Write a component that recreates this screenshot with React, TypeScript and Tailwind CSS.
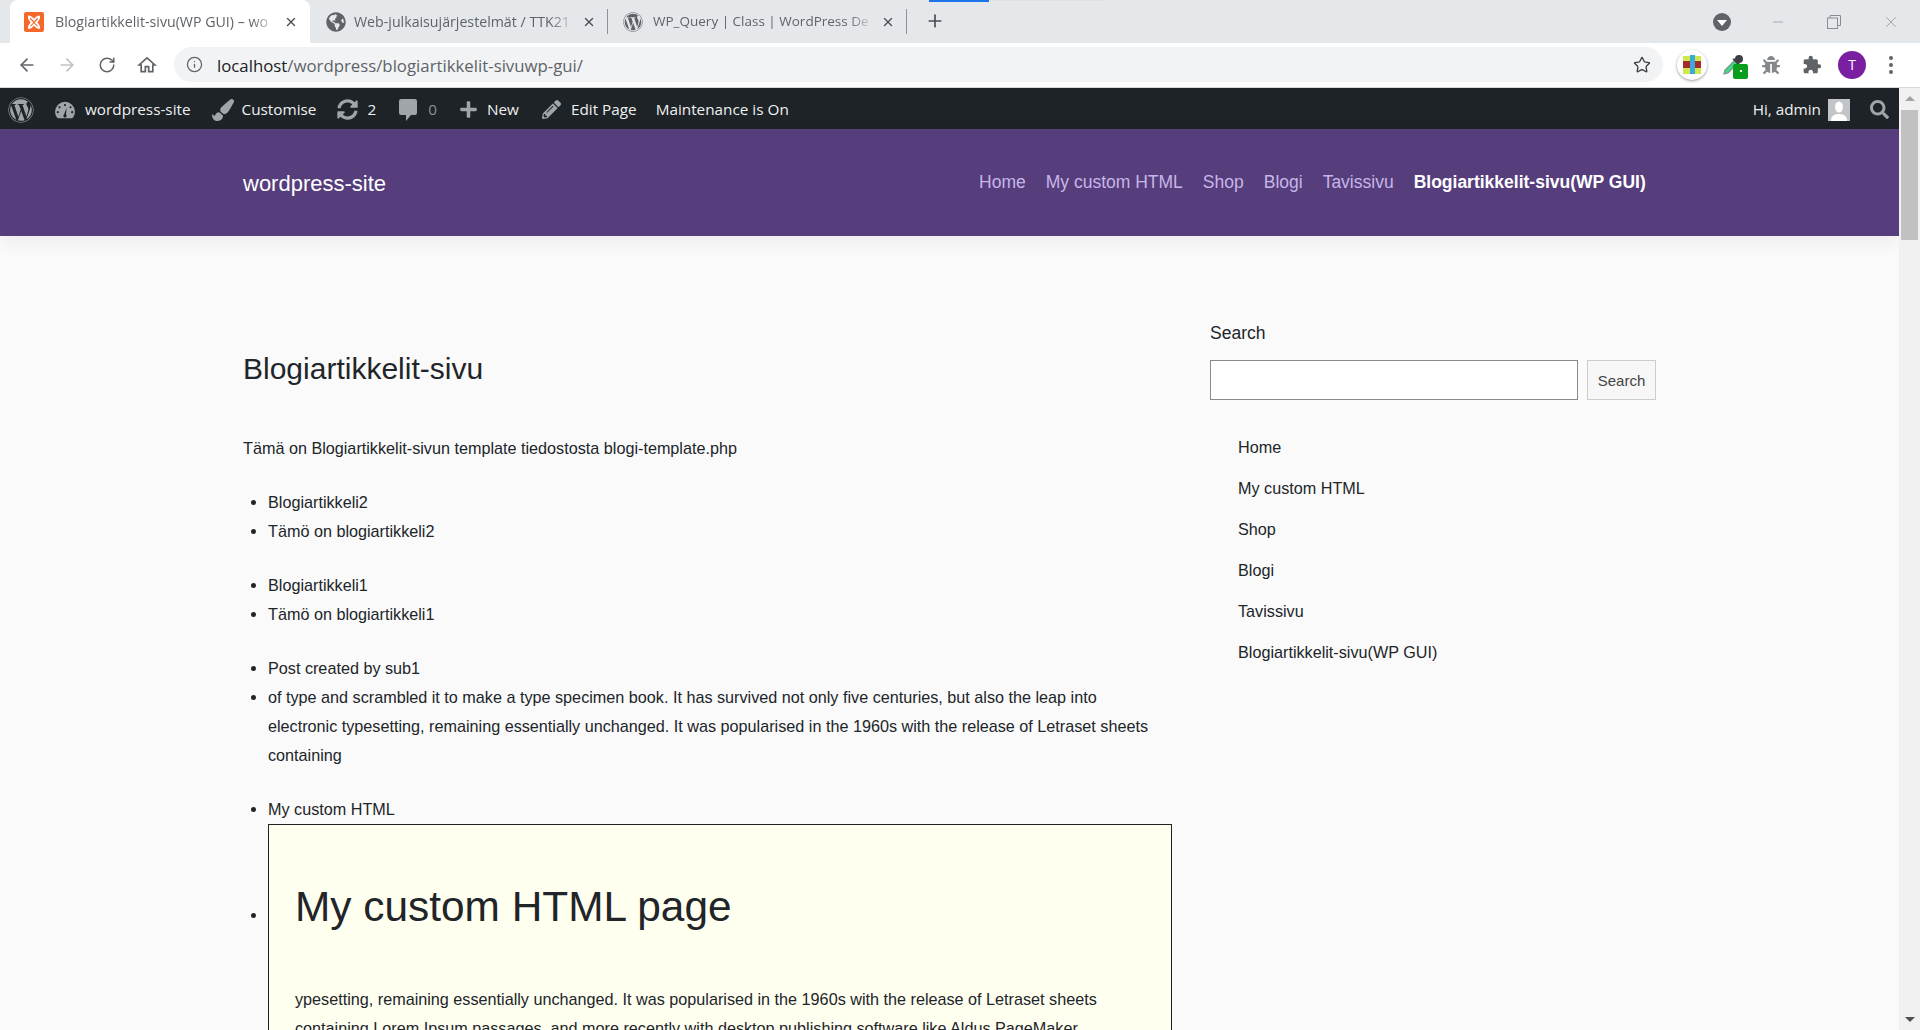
import { ArrowLeft, ArrowRight, RotateCw, Info, Star, Plus, X, Minus } from "lucide-react";
import { FaWordpress, FaPaintBrush, FaSyncAlt, FaPlus, FaPencilAlt, FaSearch, FaBug, FaGlobeAmericas } from "react-icons/fa";

const UI_FONT = "font-['Open_Sans',sans-serif]";

const XamppIcon = () => (
  <svg viewBox="0 0 20 20" className="size-5 shrink-0">
    <rect width="20" height="20" rx="2" fill="#f4692a" />
    <path d="M5 4.500c2.500 0 3.500 1.500 5 3.500 1.500-2 2.500-3.500 5-3.500 1 2-1 4-3 6 2 2 4 4 3 5.500-2.500 0-3.500-1.500-5-3.500-1.500 2-2.500 3.500-5 3.500-1-1.500 1-3.500 3-5.500-2-2-4-4-3-6z" fill="none" stroke="#fff" strokeWidth="1.800" />
  </svg>
);

const Tab = ({ icon, title, active, sep, w, gap, size }: { icon: React.ReactNode; title: string; active?: boolean; sep?: boolean; w: string; gap: string; size: string }) => (
  <div className={`relative flex items-center h-full shrink-0 pl-[14px] pr-[12px] ${w} ${active ? "bg-white rounded-t-[8px]" : ""}`}>
    {icon}
    <span className={`${gap} ${size} flex-1 overflow-hidden whitespace-nowrap text-[#5f6368] [mask-image:linear-gradient(to_right,black_88%,transparent)]`}>{title}</span>
    <X size={14} strokeWidth={2.400} className="ml-[6px] shrink-0 text-[#4a4d51]" />
    {sep && <div className="absolute right-0 top-[9px] h-[25px] w-px bg-[#8f9296]" />}
  </div>
);

const TabStrip = () => (
  <div className={`relative flex items-end h-[43px] pl-[10px] bg-[#e5e8eb] ${UI_FONT}`}>
    <div className="absolute left-[929px] top-0 h-[2px] w-[60px] bg-[#1a73e8]" />
    <div className="absolute left-[989px] top-0 h-[1px] w-[118px] bg-[#dfe1e4]" />
    <Tab w="w-[300px]" gap="ml-[11px]" size="text-[14.200px]" active icon={<XamppIcon />} title="Blogiartikkelit-sivu(WP GUI) – wo" />
    <Tab w="w-[298px]" gap="ml-[8px]" size="text-[14.200px]" sep icon={<FaGlobeAmericas size={20} className="shrink-0 text-[#5f6368] ml-[2px]" />} title="Web-julkaisujärjestelmät / TTK21" />
    <Tab w="w-[299px]" gap="ml-[10px]" size="text-[13.500px]" sep icon={<FaWordpress size={20} className="shrink-0 text-[#5f6368] ml-[1px]" />} title="WP_Query | Class | WordPress De" />
    <Plus size={20} strokeWidth={2} className="ml-[18px] mb-[12px] text-[#4a4d51]" />
    <div className="flex-1" />
    <div className="flex items-center self-start h-[36px] mt-[4px]">
      <div className="flex items-center justify-center size-[18px] rounded-full bg-[#5f6368]">
        <div className="w-0 h-0 border-x-[5px] border-x-transparent border-t-[6px] border-t-white mt-[2px]" />
      </div>
      <Minus size={16} strokeWidth={1} className="ml-[39px] text-[#8a8d91]" />
      <svg viewBox="0 0 14 14" className="size-[14px] ml-[41px]" fill="none" stroke="#8a8d91">
        <rect x="0.500" y="3" width="10" height="10.500" />
        <path d="M3 3V.5h10.500v10H10.500" />
      </svg>
      <X size={18} strokeWidth={1} className="ml-[41px] mr-[20px] text-[#8a8d91]" />
    </div>
  </div>
);

const HomeOutline = () => (
  <svg viewBox="0 0 24 24" className="size-[20px] ml-[21px]" fill="none" stroke="#5f6368" strokeWidth="2" strokeLinejoin="miter">
    <path d="M10 20v-6h4v6h5v-8h2.500L12 3.500 2.500 12H5v8z" />
  </svg>
);

const DropperIcon = () => (
  <svg viewBox="0 0 24 24" className="size-[24px]">
    <path d="M3 21l1-4L14 7l3 3L7 20z" fill="#3ddc84" stroke="#8a8d91" strokeWidth="1.200" />
    <path d="M13 5l6 6-1.500 1.500-6-6z" fill="#3c4043" />
    <circle cx="18" cy="6" r="4" fill="#3c4043" />
  </svg>
);

const PuzzleIcon = () => (
  <svg viewBox="0 0 24 24" className="size-[20px]" fill="#5f6368">
    <path d="M20.500 11H19V7c0-1.100-.9-2-2-2h-4V3.500C13 2.120 11.880 1 10.500 1S8 2.120 8 3.500V5H4c-1.100 0-1.990.9-1.990 2v3.800H3.500c1.490 0 2.700 1.210 2.700 2.700s-1.210 2.700-2.700 2.700H2V20c0 1.100.9 2 2 2h3.800v-1.500c0-1.490 1.210-2.700 2.700-2.700 1.490 0 2.700 1.210 2.700 2.700V22H17c1.100 0 2-.9 2-2v-4h1.500c1.380 0 2.500-1.120 2.500-2.500S21.880 11 20.500 11z" />
  </svg>
);

const AddressRow = () => (
  <div className={`flex items-center h-[45px] pb-px bg-white border-b border-[#d6d8da] ${UI_FONT}`}>
    <ArrowLeft size={20} strokeWidth={2} className="ml-[17px] text-[#5f6368]" />
    <ArrowRight size={20} strokeWidth={2} className="ml-[20px] text-[#bfc1c4]" />
    <RotateCw size={18} strokeWidth={2} className="ml-[21px] text-[#5f6368]" />
    <HomeOutline />
    <div className="flex items-center flex-none w-[1489px] h-[35px] ml-[17px] pl-[12px] rounded-full bg-[#f1f3f4]">
      <Info size={17} strokeWidth={1.800} className="text-[#5f6368]" />
      <span className="ml-[14px] mt-[2px] text-[16.800px] text-[#5f6368] whitespace-nowrap">
        <span className="text-[#202124]">localhost</span>/wordpress/blogiartikkelit-sivuwp-gui/
      </span>
      <div className="flex-1" />
      <Star size={18} strokeWidth={1.800} className="mr-[12px] text-[#3c4043]" />
    </div>
    <div className="relative flex items-center justify-center ml-[14px] size-[30px] rounded-full bg-white shadow-[0_1px_3px_rgba(0,0,0,0.4)]">
      <div className="size-[18px] bg-[#cfe84a]" />
      <div className="absolute w-[18px] h-[7px] bg-[#a52a2a]" />
      <div className="absolute w-[5px] h-[19px] bg-[#3ba9dc]" />
    </div>
    <div className="relative ml-[14px] size-[24px]">
      <DropperIcon />
      <div className="absolute left-[12px] top-[11px] flex items-center justify-center size-[15px] rounded-[2px] bg-[#0a9e1f]">
        <div className="size-[2px] bg-white" />
      </div>
    </div>
    <FaBug size={18} className="ml-[17px] text-[#85888b]" />
    <div className="ml-[22px]"><PuzzleIcon /></div>
    <div className="flex items-center justify-center ml-[16px] size-[28px] rounded-full bg-[#7b1fa2] text-white text-[14px]">T</div>
    <div className="flex flex-col gap-[3px] ml-[23px]">
      <div className="size-[4px] rounded-full bg-[#5f6368]" />
      <div className="size-[4px] rounded-full bg-[#5f6368]" />
      <div className="size-[4px] rounded-full bg-[#5f6368]" />
    </div>
  </div>
);

const DashIcon = () => (
  <svg viewBox="0 0 20 20" className="size-[22px] shrink-0" fill="#a0a5aa">
    <path fillRule="evenodd" d="M10 2.500a9 9 0 0 0-9 9c0 2.500 1 4.500 2.400 6h13.200c1.400-1.500 2.400-3.500 2.400-6a9 9 0 0 0-9-9zM10 4.500a1 1 0 1 1 0 2 1 1 0 0 1 0-2zM5 6.500a1 1 0 1 1 0 2 1 1 0 0 1 0-2zM15 6.500a1 1 0 1 1 0 2 1 1 0 0 1 0-2zM3.500 11a1 1 0 1 1 0 2 1 1 0 0 1 0-2zM16.500 11a1 1 0 1 1 0 2 1 1 0 0 1 0-2zM11.500 8l-.6 6.100a1.500 1.500 0 1 1-1.800 0z" />
  </svg>
);

const CommentIcon = () => (
  <svg viewBox="0 0 18 22" className="h-[22px] w-[18px] shrink-0" fill="#a0a5aa">
    <path d="M2 0h14a2 2 0 0 1 2 2v12a2 2 0 0 1-2 2h-4l-5 6v-6H2a2 2 0 0 1-2-2V2a2 2 0 0 1 2-2z" />
  </svg>
);

const AdminBar = () => (
  <div className={`flex shrink-0 items-center h-[41px] pt-[2px] bg-[#1d2327] text-[#f0f0f1] text-[15.300px] whitespace-nowrap ${UI_FONT}`}>
    <FaWordpress size={26} className="ml-[8px] text-[#a0a5aa]" />
    <div className="ml-[20px]"><DashIcon /></div>
    <span className="ml-[9px]">wordpress-site</span>
    <FaPaintBrush size={22} className="ml-[21px] text-[#a0a5aa]" />
    <span className="ml-[8px]">Customise</span>
    <FaSyncAlt size={21} className="ml-[21px] text-[#a0a5aa]" />
    <span className="ml-[9px]">2</span>
    <div className="ml-[23px]"><CommentIcon /></div>
    <span className="ml-[11px] text-[#8c8f94]">0</span>
    <FaPlus size={19} className="ml-[22px] text-[#a0a5aa]" />
    <span className="ml-[9px]">New</span>
    <FaPencilAlt size={19} className="ml-[23px] text-[#a0a5aa]" />
    <span className="ml-[10px]">Edit Page</span>
    <span className="ml-[19px]">Maintenance is On</span>
    <div className="flex-1" />
    <span>Hi, admin</span>
    <div className="ml-[7px] flex items-end justify-center size-[22px] bg-[#c3c4c7] overflow-hidden">
      <svg viewBox="0 0 22 22" className="size-[22px]" fill="#fff">
        <ellipse cx="11" cy="8" rx="4" ry="5.500" />
        <path d="M3 22c0-5 3-7 8-7s8 2 8 7z" />
      </svg>
    </div>
    <FaSearch size={19} className="ml-[20px] mr-[10px] text-[#a0a5aa]" />
  </div>
);

const navItems = ["Home", "My custom HTML", "Shop", "Blogi", "Tavissivu"];

const SiteHeader = () => (
  <div className="flex shrink-0 items-center h-[107px] pt-[2px] pl-[243px] bg-[#563d7c] shadow-[0_8px_16px_rgba(0,0,0,0.05)]">
    <span className="text-[22px] text-white">wordpress-site</span>
    <nav className="flex items-center gap-[20px] ml-[593px] -mt-[2px] text-[17.500px] text-[#c6b6e8]">
      {navItems.map((n) => (
        <span key={n}>{n}</span>
      ))}
      <span className="font-bold text-white">Blogiartikkelit-sivu(WP GUI)</span>
    </nav>
  </div>
);

const posts = [
  ["Blogiartikkeli2", "Tämö on blogiartikkeli2"],
  ["Blogiartikkeli1", "Tämö on blogiartikkeli1"],
  [
    "Post created by sub1",
    "of type and scrambled it to make a type specimen book. It has survived not only five centuries, but also the leap into electronic typesetting, remaining essentially unchanged. It was popularised in the 1960s with the release of Letraset sheets containing",
  ],
];

const MainColumn = () => (
  <div className="w-[929px] shrink-0">
    <h1 className="mt-[115px] text-[30px] leading-[36px] text-[#212529]">Blogiartikkelit-sivu</h1>
    <p className="mt-[47px] mb-[25px]">Tämä on Blogiartikkelit-sivun template tiedostosta blogi-template.php</p>
    {posts.map((p) => (
      <ul key={p[0]} className="list-disc pl-[25px] mb-[25px] max-w-[925px]">
        {p.map((t) => (
          <li key={t}>{t}</li>
        ))}
      </ul>
    ))}
    <ul className="list-disc pl-[25px]">
      <li>My custom HTML</li>
      <li>
        <div className="border border-[#222] bg-[#fffff0] px-[26px]">
          <h2 className="mt-[55px] text-[42.400px] leading-[54px] text-[#212529]">My custom HTML page</h2>
          <p className="mt-[51px]">
            ypesetting, remaining essentially unchanged. It was popularised in the 1960s with the release of Letraset sheets containing Lorem Ipsum passages, and more recently with desktop publishing software like Aldus PageMaker including versions of Lorem Ipsum.
          </p>
        </div>
      </li>
    </ul>
  </div>
);

const Sidebar = () => (
  <div className="ml-[38px] w-[446px] shrink-0 pt-[83px]">
    <div className="text-[17.500px] leading-[28px]">Search</div>
    <div className="flex mt-[13px] h-[40px]">
      <div className="w-[368px] bg-white border border-[#8a8a8a]" />
      <button className="ml-[9px] w-[69px] bg-[#f7f7f7] border border-[#cccccc] text-[15px] text-[#444]">Search</button>
    </div>
    <ul className="mt-[27px] pl-[28px]">
      {[...navItems, "Blogiartikkelit-sivu(WP GUI)"].map((n) => (
        <li key={n} className="h-[41px] leading-[41px]">{n}</li>
      ))}
    </ul>
  </div>
);

const ScrollBar = () => (
  <div className="flex flex-col items-center w-[21px] shrink-0 bg-[#f1f1f1]">
    <div className="flex items-center justify-center h-[21px] w-full">
      <div className="w-0 h-0 border-x-[5px] border-x-transparent border-b-[5px] border-b-[#a3a3a3]" />
    </div>
    <div className="h-[130px] w-[17px] mt-px bg-[#c1c1c1]" />
    <div className="flex-1" />
    <div className="flex items-center justify-center h-[21px] w-full">
      <div className="w-0 h-0 border-x-[5px] border-x-transparent border-t-[5px] border-t-[#505050]" />
    </div>
  </div>
);

export default function App() {
  return (
    <div className="flex flex-col h-[1030px] w-[1920px] overflow-hidden font-['Liberation_Sans',Arial,sans-serif]">
      <TabStrip />
      <AddressRow />
      <div className="flex flex-1 min-h-0">
        <div className="flex flex-col flex-1 min-w-0 overflow-hidden bg-[#fafafa] text-[16.200px] leading-[29px] text-[#212529]">
          <AdminBar />
          <SiteHeader />
          <div className="flex shrink-0 pl-[243px]">
            <MainColumn />
            <Sidebar />
          </div>
        </div>
        <ScrollBar />
      </div>
    </div>
  );
}
